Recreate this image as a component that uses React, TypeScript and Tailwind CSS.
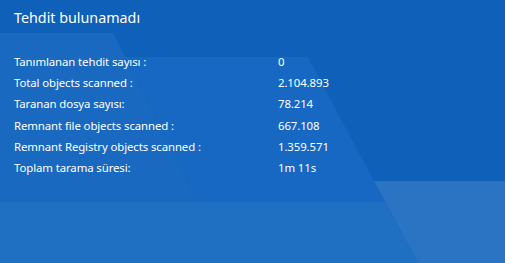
export default function App() {
  const rows = [
    { label: "Tanımlanan tehdit sayısı :", value: "0" },
    { label: "Total objects scanned :", value: "2.104.893" },
    { label: "Taranan dosya sayısı:", value: "78.214" },
    { label: "Remnant file objects scanned :", value: "667.108" },
    { label: "Remnant Registry objects scanned :", value: "1.359.571" },
    { label: "Toplam tarama süresi:", value: "1m 11s" },
  ];

  return (
    <div className="relative w-[505px] h-[263px] overflow-hidden bg-[#0e60b8] font-['Noto_Sans',sans-serif] text-white">
      {/* background shapes */}
      <svg className="absolute inset-0" width="505" height="263" viewBox="0 0 505 263">
        <polygon points="0,33 113,33 198,202 0,202" fill="#1a69c0" />
        <polygon points="125,57 308,57 385,202 198,202" fill="#1668c3" />
        <polygon points="0,202 385,202 418,263 0,263" fill="#1f6fc3" />
        <polygon points="374,181 505,181 505,263 418,263" fill="#2a74c3" />
      </svg>

      <div className="relative flex flex-col px-[14px] pt-[8px]">
        <h1 className="text-[14.3px] leading-[20px] font-normal">Tehdit bulunamadı</h1>
        <div className="grid grid-cols-[264px_1fr] mt-[23px] text-[11.4px] tracking-[-0.1px] leading-[21.2px]">
          {rows.map((r) => (
            <div key={r.label} className="contents">
              <span>{r.label}</span>
              <span>{r.value}</span>
            </div>
          ))}
        </div>
      </div>
    </div>
  );
}
